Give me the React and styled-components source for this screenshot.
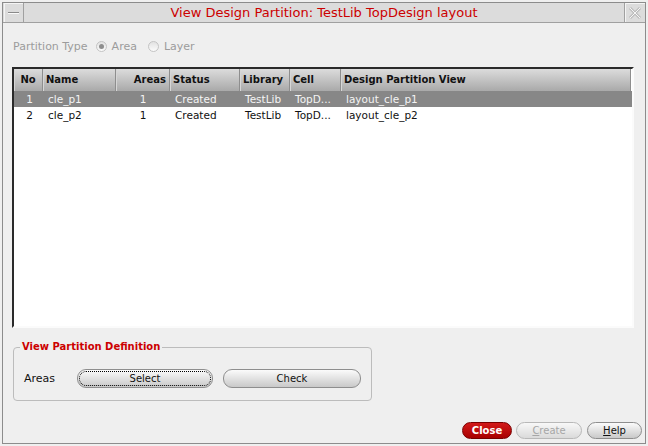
import React from "react";
import styled, { createGlobalStyle } from "styled-components";

const GlobalStyle = createGlobalStyle`
  html, body { margin: 0; padding: 0; background: #efefef; }
  * { box-sizing: border-box; }
`;

const FONT = `"DejaVu Sans", "Liberation Sans", sans-serif`;

const Page = styled.div`
  width: 648px;
  height: 446px;
  padding: 2px;
  background: #efefef;
  font-family: ${FONT};
`;

const Window = styled.div`
  height: 100%;
  display: flex;
  flex-direction: column;
  border: 1px solid #8c8c8c;
  background: #efefef;
`;

/* ---------- title bar ---------- */
const TitleBar = styled.div`
  display: flex;
  height: 20px;
  background: #dcdcdc;
  border-bottom: 1px solid #a0a0a0;
`;

const MinBox = styled.div`
  width: 20px;
  margin-left: 1px;
  border-right: 1px solid #a0a0a0;
  display: flex;
  align-items: center;
  justify-content: center;
  box-shadow: inset 1px 1px 0 #f4f4f4;
`;

const Dash = styled.span`
  width: 11px;
  border-top: 1px solid #8a8a8a;
  border-bottom: 1px solid #fafafa;
`;

const Title = styled.div`
  flex: 1;
  text-align: center;
  font-size: 13px;
  line-height: 19px;
  color: #cc0000;
`;

const CloseBox = styled.div`
  width: 21px;
  border-left: 1px solid #a0a0a0;
  display: flex;
  align-items: center;
  justify-content: center;
  box-shadow: inset 1px 1px 0 #f4f4f4;
`;

/* ---------- body ---------- */
const Body = styled.div`
  flex: 1;
  display: flex;
  flex-direction: column;
  padding: 15px 11px 0 9px;
`;

const TypeRow = styled.div`
  display: flex;
  align-items: center;
  height: 16px;
  padding-left: 1px;
  font-size: 11px;
  color: #9c9c9c;
`;

const TypeLabel = styled.span`
  margin-right: 8px;
`;

const Radio = styled.span`
  width: 11px;
  height: 11px;
  border-radius: 50%;
  border: 1px solid #c4c4c4;
  background: linear-gradient(#e2e2e2, #fbfbfb);
  display: inline-flex;
  align-items: center;
  justify-content: center;
  margin-right: 5px;
  &::after {
    content: "";
    width: 5px;
    height: 5px;
    border-radius: 50%;
    background: ${(p) => (p.checked ? "#8e8e8e" : "transparent")};
  }
`;

const RadioText = styled.span`
  margin-right: 11px;
`;

/* ---------- table ---------- */
const TableFrame = styled.div`
  margin-top: 13px;
  height: 261px;
  border-style: solid;
  border-width: 2px;
  border-color: #2a2a2a #fbfbfb #fbfbfb #2a2a2a;
  background: #fff;
`;

const COLS = "29px 73px 54px 70px 50px 51px 1fr";

const HeaderRow = styled.div`
  display: grid;
  grid-template-columns: ${COLS};
  height: 22px;
  margin-right: 1px;
  background: linear-gradient(#dcdcdc, #a9a9a9);
`;

const HeadCell = styled.div`
  font-size: 10px;
  font-weight: bold;
  line-height: 22px;
  color: #111;
  padding: 0 3px;
  text-align: ${(p) => p.align || "left"};
  border-right: 1px solid #8e8e8e;
  box-shadow: inset 1px 0 0 #d6d6d6;
  white-space: nowrap;
  overflow: hidden;
`;

const Row = styled.div`
  display: grid;
  grid-template-columns: ${COLS};
  height: 16px;
  background: ${(p) => (p.selected ? "#878787" : "#fff")};
  color: ${(p) => (p.selected ? "#f4f4f4" : "#111")};
`;

const Cell = styled.div`
  font-size: 10.5px;
  line-height: 16px;
  padding: ${(p) => (p.align === "right" ? "0 10px 0 0" : p.align === "center" ? "0" : "0 0 0 5px")};
  text-align: ${(p) => p.align || "left"};
  white-space: nowrap;
  overflow: hidden;
`;

/* ---------- group box ---------- */
const Group = styled.fieldset`
  margin: 13px 0 0 1px;
  width: 359px;
  padding: 0 0 12px 6px;
  border: 1px solid #bcbcbc;
  border-radius: 4px;
`;

const Legend = styled.legend`
  padding: 0 2px;
  font-size: 10px;
  font-weight: bold;
  line-height: 12px;
  color: #cc0000;
`;

const GroupRow = styled.div`
  display: flex;
  align-items: center;
  margin-top: 16px;
  padding-left: 4px;
  height: 19px;
`;

const FieldLabel = styled.span`
  font-size: 11px;
  color: #111;
  width: 53px;
`;

const PillButton = styled.button`
  width: ${(p) => p.w}px;
  height: ${(p) => p.h || 19}px;
  margin-left: ${(p) => p.gap || 0}px;
  padding: 0;
  font-family: ${FONT};
  font-size: 10px;
  font-weight: ${(p) => (p.danger ? "bold" : "normal")};
  color: ${(p) => (p.danger ? "#fff" : p.disabled ? "#a6a6a6" : "#111")};
  border: 1px solid ${(p) => (p.danger ? "#7a0000" : p.disabled ? "#b8b8b8" : "#8e8e8e")};
  border-radius: 9px;
  background: ${(p) =>
    p.danger
      ? "linear-gradient(#d21a1a, #a80000)"
      : p.disabled
      ? "linear-gradient(#f8f8f8, #dadada)"
      : "linear-gradient(#fbfbfb, #c9c9c9)"};
  outline: ${(p) => (p.focused ? "1px dotted #000" : "none")};
  outline-offset: -3px;
`;

/* ---------- footer ---------- */
const Footer = styled.div`
  display: flex;
  justify-content: flex-end;
  padding: 0 3px 4px 0;
`;

const Mnemonic = styled.span`
  text-decoration: underline;
`;

const rows = [
  { no: 1, name: "cle_p1", areas: 1, status: "Created", lib: "TestLib", cell: "TopD...", view: "layout_cle_p1" },
  { no: 2, name: "cle_p2", areas: 1, status: "Created", lib: "TestLib", cell: "TopD...", view: "layout_cle_p2" },
];

export default function App() {
  return (
    <Page>
      <GlobalStyle />
      <Window>
        <TitleBar>
          <MinBox>
            <Dash />
          </MinBox>
          <Title>View Design Partition: TestLib TopDesign layout</Title>
          <CloseBox>
            <svg width="14" height="14" viewBox="0 0 14 14">
              <path d="M2 2L12 12M12 2L2 12" stroke="#bdbdbd" strokeWidth="3" />
              <path d="M2 2L12 12M12 2L2 12" stroke="#f6f6f6" strokeWidth="1" />
            </svg>
          </CloseBox>
        </TitleBar>

        <Body>
          <TypeRow>
            <TypeLabel>Partition Type</TypeLabel>
            <Radio checked />
            <RadioText>Area</RadioText>
            <Radio />
            <RadioText>Layer</RadioText>
          </TypeRow>

          <TableFrame>
            <HeaderRow>
              <HeadCell align="center">No</HeadCell>
              <HeadCell>Name</HeadCell>
              <HeadCell align="right">Areas</HeadCell>
              <HeadCell>Status</HeadCell>
              <HeadCell>Library</HeadCell>
              <HeadCell>Cell</HeadCell>
              <HeadCell>Design Partition View</HeadCell>
            </HeaderRow>
            {rows.map((r, i) => (
              <Row key={r.no} selected={i === 0}>
                <Cell align="right">{r.no}</Cell>
                <Cell>{r.name}</Cell>
                <Cell align="center">{r.areas}</Cell>
                <Cell>{r.status}</Cell>
                <Cell>{r.lib}</Cell>
                <Cell>{r.cell}</Cell>
                <Cell>{r.view}</Cell>
              </Row>
            ))}
          </TableFrame>

          <Group>
            <Legend>View Partition Definition</Legend>
            <GroupRow>
              <FieldLabel>Areas</FieldLabel>
              <PillButton w={136} focused>Select</PillButton>
              <PillButton w={138} gap={10}>Check</PillButton>
            </GroupRow>
          </Group>
        </Body>

        <Footer>
          <PillButton w={50} h={17} danger>Close</PillButton>
          <PillButton w={66} h={17} gap={4} disabled>
            <Mnemonic>C</Mnemonic>reate
          </PillButton>
          <PillButton w={55} h={17} gap={5}>
            <Mnemonic>H</Mnemonic>elp
          </PillButton>
        </Footer>
      </Window>
    </Page>
  );
}
